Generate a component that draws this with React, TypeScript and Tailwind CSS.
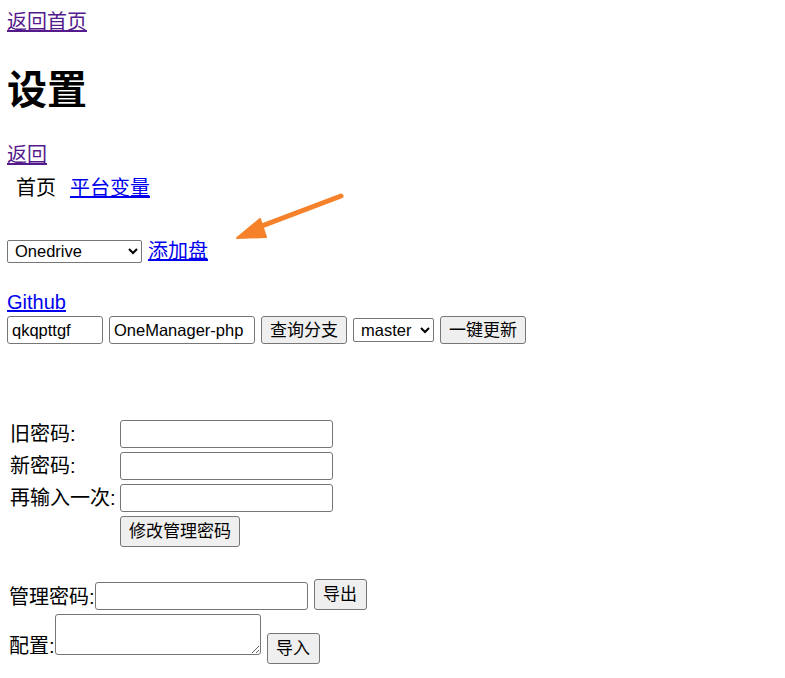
import React from "react";

const inputCls =
  "h-[28px] border border-[#767676] rounded-[3px] bg-white px-[4px] text-[16.5px] text-black outline-none";
const btnCls =
  "border border-[#767676] rounded-[3px] bg-[#efefef] px-[8px] text-[17px] text-black leading-none";

export default function App() {
  return (
    <div
      className="relative min-h-[678px] bg-white text-black text-[20px] px-[7px]"
      style={{ fontFamily: '"Liberation Sans", "Noto Sans CJK SC", sans-serif' }}
    >
      {/* back home */}
      <div className="pt-[10px] h-[34px] leading-[24px]">
        <a href="#" className="text-[#551a8b] underline">返回首页</a>
      </div>

      <h1 className="mt-[32px] h-[48px] text-[40px] font-bold leading-[48px]">设置</h1>

      <div className="mt-[29px] h-[24px] leading-[24px]">
        <a href="#" className="text-[#551a8b] underline">返回</a>
      </div>

      {/* tabs */}
      <div className="mt-[9px] flex h-[24px] items-center gap-[14px] pl-[9px] leading-[24px]">
        <span>首页</span>
        <a href="#" className="text-[#0000ee] underline">平台变量</a>
      </div>

      {/* drive select */}
      <div className="mt-[39px] flex h-[24px] items-center gap-[6px]">
        <select className="h-[23px] w-[135px] border border-[#767676] rounded-[2px] bg-white pl-[3px] text-[16.5px] text-black">
          <option>Onedrive</option>
        </select>
        <a href="#" className="text-[#0000ee] underline leading-[24px]">添加盘</a>
      </div>

      <div className="mt-[27px] h-[24px] leading-[24px]">
        <a href="#" className="text-[#0000ee] underline">Github</a>
      </div>

      {/* github row */}
      <div className="mt-[2px] flex h-[28px] items-center gap-[6px]">
        <input className={`${inputCls} w-[96px]`} defaultValue="qkqpttgf" />
        <input className={`${inputCls} w-[146px]`} defaultValue="OneManager-php" />
        <button className={`${btnCls} h-[28px] w-[86px]`}>查询分支</button>
        <select className="h-[24px] w-[81px] border border-[#767676] rounded-[2px] bg-white pl-[3px] text-[16.5px] text-black">
          <option>master</option>
        </select>
        <button className={`${btnCls} h-[28px] w-[86px]`}>一键更新</button>
      </div>

      {/* password table */}
      <div className="mt-[76px] flex flex-col gap-[4px] pl-[3px]">
        {["旧密码:", "新密码:", "再输入一次:"].map((label) => (
          <div key={label} className="flex h-[28px] items-center">
            <span className="w-[110px] leading-[24px]">{label}</span>
            <input type="password" className={`${inputCls} w-[213px]`} />
          </div>
        ))}
        <div className="flex h-[31px] items-center">
          <span className="w-[110px]" />
          <button className={`${btnCls} h-[31px] w-[120px]`}>修改管理密码</button>
        </div>
      </div>

      {/* export */}
      <div className="mt-[32px] flex items-end pl-[2px]">
        <span className="leading-[24px] mb-[1px]">管理密码:</span>
        <input type="password" className={`${inputCls} w-[213px]`} />
        <button className={`${btnCls} ml-[6px] h-[31px] w-[53px]`}>导出</button>
      </div>

      {/* import */}
      <div className="mt-[4px] flex items-start pl-[2px]">
        <span className="mt-[20px] leading-[24px]">配置:</span>
        <textarea className="h-[41px] w-[206px] border border-[#767676] rounded-[3px] bg-white outline-none" />
        <button className={`${btnCls} ml-[6px] mt-[19px] h-[31px] w-[53px]`}>导入</button>
      </div>

      {/* annotation arrow */}
      <svg
        className="absolute left-[230px] top-[188px]"
        width="120"
        height="56"
        viewBox="0 0 120 56"
        fill="none"
      >
        <path d="M111 8 L24 41" stroke="#f5822a" strokeWidth="5" strokeLinecap="round" />
        <path d="M7 50 L30 31 L36 49 Z" fill="#f5822a" stroke="#f5822a" strokeWidth="2" strokeLinejoin="round" />
      </svg>
    </div>
  );
}
